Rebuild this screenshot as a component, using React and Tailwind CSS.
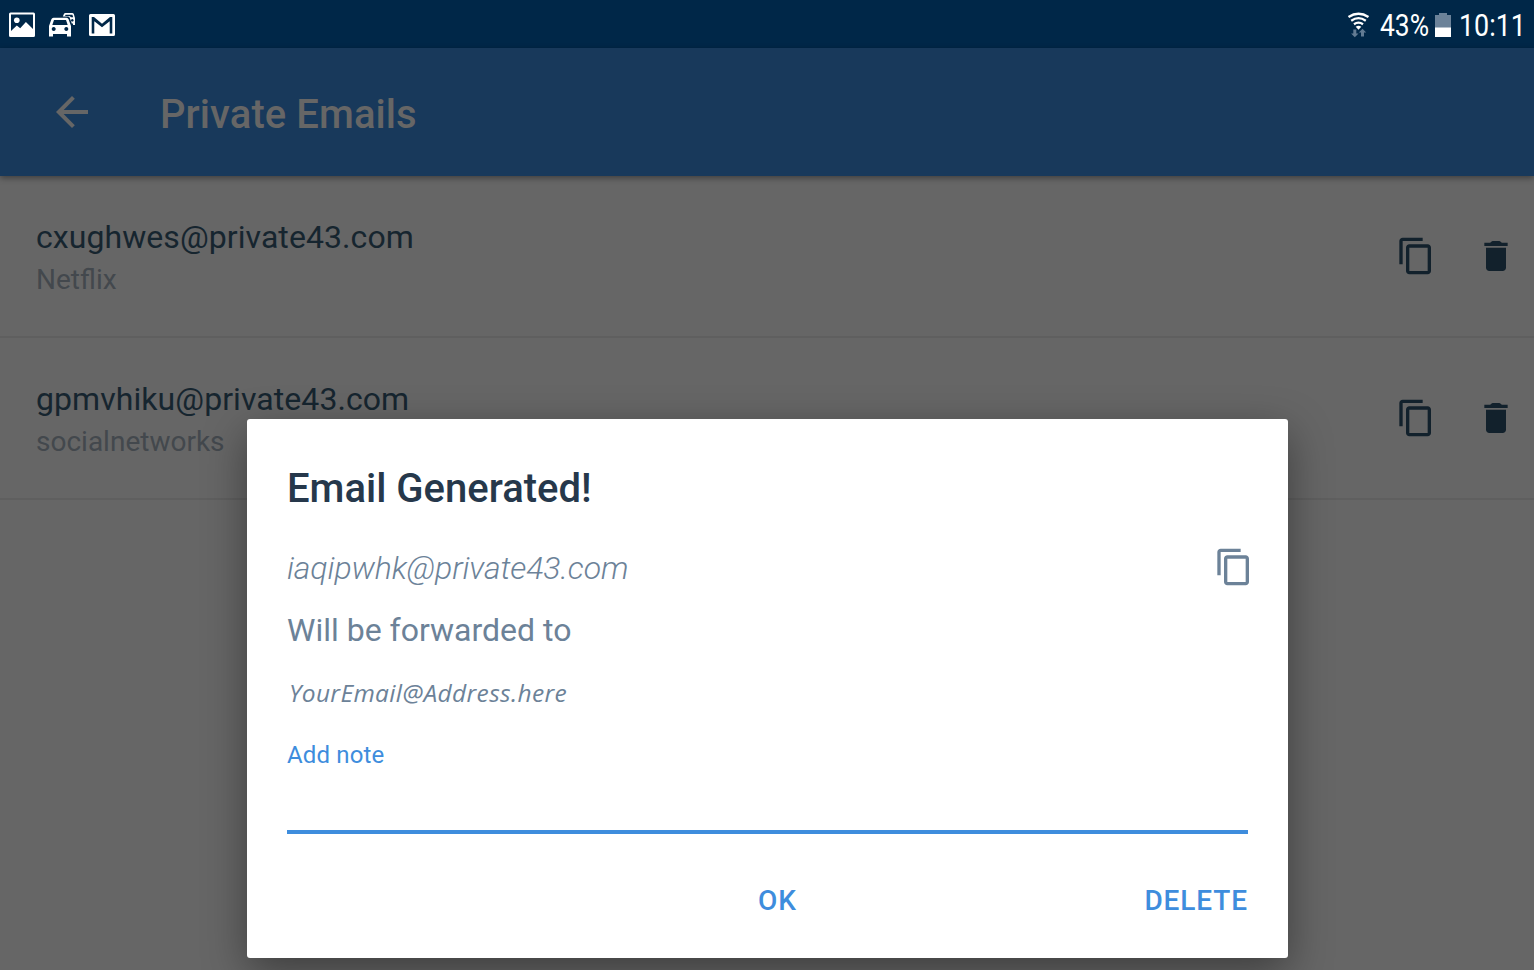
import React from "react";

const COPY =
  "M16 1H4c-1.1 0-2 .9-2 2v14h2V3h12V1zm3 4H8c-1.1 0-2 .9-2 2v14c0 1.1.9 2 2 2h11c1.1 0 2-.9 2-2V7c0-1.1-.9-2-2-2zm0 16H8V7h11v14z";
const TRASH = "M6 19c0 1.1.9 2 2 2h8c1.1 0 2-.9 2-2V7H6v12zM19 4h-3.500Q14.500 3 14 3h-4Q9.500 3 8.500 4H5v2h14V4z";
const ARROW = "M20 11H7.830l5.590-5.590L12 4l-8 8 8 8 1.410-1.410L7.830 13H20v-2z";

function Icon({ d, className }) {
  return (
    <svg viewBox="0 0 24 24" fill="currentColor" className={className}>
      <path d={d} />
    </svg>
  );
}

function StatusBar() {
  return (
    <div className="flex h-12 shrink-0 items-center justify-between bg-[#002748] text-white">
      <svg viewBox="0 0 120 48" className="h-12 w-[120px]" fill="#fff">
        <path
          fillRule="evenodd"
          d="M10.500 12.500h23a1.500 1.500 0 0 1 1.500 1.500v21.500a1.500 1.500 0 0 1-1.500 1.500h-23a1.500 1.500 0 0 1-1.500-1.500V14a1.500 1.500 0 0 1 1.500-1.500zM11 14.500v16.500l5.800-5.500 3.400 2.800 5.700-6.300 7.100 7V14.500z"
        />
        <circle cx="16.800" cy="20.300" r="2.800" />
        <path
          fillRule="evenodd"
          d="M53.500 17.800h13q1.600 0 2.100 1.500l2.400 6.700v10.500h-4v-2.500H53v2.500h-4V26l2.400-6.700q.5-1.500 2.100-1.500zM54 20l-1.700 5h15.400l-1.700-5zM53.700 27a2 2 0 1 0 .01 0zM66.300 27a2 2 0 1 0 .01 0z"
        />
        <path
          fillRule="evenodd"
          d="M62.800 16.500l1.100-2.400q.4-1.100 1.600-1.100h6.700q1.200 0 1.600 1.100l1.200 3.900v7h-2v-1.500h-1.200l-2.100-5.700q-.5-1.300-2-1.300zM65.500 14.700l-.4 1.300h3.600q1.500 0 2.200 1.300h2.300l-.8-2.600zM72.300 19a1.300 1.300 0 1 0 .01 0z"
        />
        <path
          fillRule="evenodd"
          d="M90.500 14h23a1.500 1.500 0 0 1 1.500 1.500v19a1.500 1.500 0 0 1-1.500 1.500h-23a1.500 1.500 0 0 1-1.500-1.500v-19a1.500 1.500 0 0 1 1.500-1.500zM91.700 17v16.500h2.600V21.300l7.700 6 7.700-6v12.200h2.600V17h-2.300l-8 6.800-8-6.800z"
        />
      </svg>
      <div className="flex items-center">
        <svg viewBox="1344 0 32 48" className="h-12 w-8" fill="none">
          <g stroke="#fff" strokeWidth="2.300">
            <path d="M1348.500 17q10-6.500 20 0" />
            <path d="M1351.200 20.700q7.300-5 14.600 0" />
            <path d="M1354 24.300q4.500-3.200 9 0" />
          </g>
          <path d="M1355.700 26.700q2.800-2 5.600 0l-2.800 3z" fill="#fff" />
          <path
            d="M1353.300 29.500h3v4h2.200l-3.700 3.800-3.700-3.800h2.200zM1361 36.500h3v-4h2.200l-3.700-3.800-3.700 3.800h2.200z"
            fill="#627b93"
          />
        </svg>
        <span className="ml-1 w-[55px] origin-left scale-x-[0.825] whitespace-nowrap pt-[3px] text-[32px] leading-[45px]">43%</span>
        <svg viewBox="0 0 16 26" className="mt-[3px] h-[26px] w-4">
          <path d="M0 2h4V0h8v2h4v13H0z" fill="#6b8299" />
          <path d="M0 14.500h16V24H0z" fill="#fff" />
        </svg>
        <span className="ml-2 w-[75px] origin-left scale-x-[0.84] whitespace-nowrap pt-[3px] text-[32px] leading-[45px]">10:11</span>
      </div>
    </div>
  );
}

function EmailRow({ address, note }) {
  return (
    <li className="flex h-[162px] items-start justify-between border-b-2 border-[#5f5f5f] pl-9 pr-[18px] pt-[42px]">
      <div>
        <div className="text-[32px] leading-[38px] tracking-[0.07px] text-[#16252f]">{address}</div>
        <div className="mt-[6px] text-[28px] leading-9 text-[#43484d]">{note}</div>
      </div>
      <div className="flex gap-10 pt-[18px] text-[#12212c]">
        <Icon d={COPY} className="size-10" />
        <Icon d={TRASH} className="size-10" />
      </div>
    </li>
  );
}

function Dialog() {
  return (
    <section className="absolute left-[247px] top-[419px] flex h-[539px] w-[1041px] flex-col rounded-[3px] bg-white px-10 pt-[46px] text-[#6c8298] shadow-[0_14px_44px_rgba(0,0,0,0.4)]">
      <h2 className="text-[40px] font-medium leading-[48px] text-[#26384b]">Email Generated!</h2>
      <div className="mt-[34px] flex h-10 items-center justify-between">
        <span className="pt-[2px] text-[32px] font-light italic leading-[38px] tracking-[-0.12px]">iaqipwhk@private43.com</span>
        <Icon d={COPY} className="-mr-[6px] size-10" />
      </div>
      <p className="mt-6 text-[32px] leading-[38px]">Will be forwarded to</p>
      <p className="ml-[2px] mt-7 font-['Open_Sans',sans-serif] text-[24.5px] italic leading-8 tracking-[0.35px]">YourEmail@Address.here</p>
      <label className="mt-[31px] text-[24px] leading-[30px] tracking-[0.15px] text-[#3e8ddd]">Add note</label>
      <div className="mt-[60px] h-1 shrink-0 bg-[#3e8ddd]" />
      <div className="mt-[51px] flex justify-between text-[28px] font-medium leading-8 tracking-[0.9px] text-[#3e8ddd]">
        <button className="ml-[471px]">OK</button>
        <button>DELETE</button>
      </div>
    </section>
  );
}

export default function App() {
  return (
    <main className="relative flex h-[970px] w-[1534px] flex-col overflow-hidden bg-[#666] font-[Roboto,sans-serif]">
      <StatusBar />
      <header className="relative flex h-32 shrink-0 items-center bg-[#18395b] pl-12 text-[#666] shadow-[0_2px_6px_rgba(0,0,0,0.4)]">
        <Icon d={ARROW} className="size-12" />
        <h1 className="ml-16 pt-[6px] text-[40px] font-medium leading-[46px] tracking-[0.08px]">Private Emails</h1>
      </header>
      <ul>
        <EmailRow address="cxughwes@private43.com" note="Netflix" />
        <EmailRow address="gpmvhiku@private43.com" note="socialnetworks" />
      </ul>
      <Dialog />
    </main>
  );
}
